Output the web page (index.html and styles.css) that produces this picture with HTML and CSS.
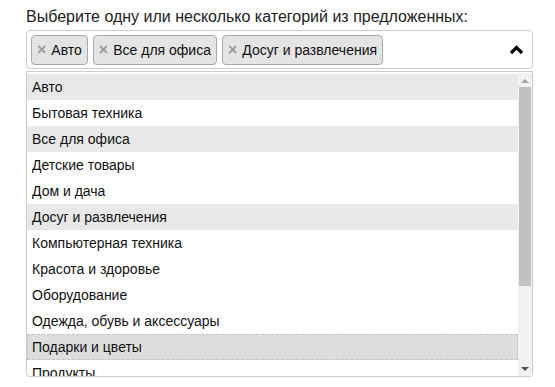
FILE: index.html
```html
<!DOCTYPE html>
<html lang="ru">

<head>
    <meta charset="UTF-8">
    <title>Категории</title>
    <link rel="stylesheet" href="styles.css">
</head>

<body>
    <div class="field">
        <label class="field-label">Выберите одну или несколько категорий из предложенных:</label>

        <!-- Поле с выбранными тегами -->
        <div class="select-box">
            <ul class="tags">
                <li class="tag"><span class="tag-remove">×</span>Авто</li>
                <li class="tag"><span class="tag-remove">×</span>Все для офиса</li>
                <li class="tag"><span class="tag-remove">×</span>Досуг и развлечения</li>
            </ul>
            <svg class="arrow" width="15" height="11" viewBox="0 0 15 11">
                <path d="M2 9 L7.5 3.5 L13 9" fill="none" stroke="#000" stroke-width="3.2"/>
            </svg>
        </div>

        <!-- Выпадающий список -->
        <div class="dropdown">
            <ul class="options">
                <li class="option selected">Авто</li>
                <li class="option">Бытовая техника</li>
                <li class="option selected">Все для офиса</li>
                <li class="option">Детские товары</li>
                <li class="option">Дом и дача</li>
                <li class="option selected">Досуг и развлечения</li>
                <li class="option">Компьютерная техника</li>
                <li class="option">Красота и здоровье</li>
                <li class="option">Оборудование</li>
                <li class="option">Одежда, обувь и аксессуары</li>
                <li class="option highlighted">Подарки и цветы</li>
                <li class="option">Продукты</li>
            </ul>

            <!-- Полоса прокрутки -->
            <div class="scrollbar">
                <div class="scroll-btn">
                    <svg width="8" height="5" viewBox="0 0 8 5"><path d="M0 5 L4 1 L8 5 Z" fill="#a3a3a3"/></svg>
                </div>
                <div class="scroll-track">
                    <div class="scroll-thumb"></div>
                </div>
                <div class="scroll-btn">
                    <svg width="8" height="5" viewBox="0 0 8 5"><path d="M0 0 L8 0 L4 4 Z" fill="#505050"/></svg>
                </div>
            </div>
        </div>
    </div>
</body>

</html>
```

FILE: styles.css
```css
* {
    margin: 0;
    padding: 0;
    box-sizing: border-box;
}

body {
    font-family: 'Liberation Sans', Arial, sans-serif;
    color: #222;
    background: #fff;
}

.field {
    width: 533px;
    padding: 8px 0 0 26px;
}

.field-label {
    display: block;
    font-size: 16px;
    line-height: 18px;
    margin-bottom: 4px;
}

/* Поле выбора */
.select-box {
    display: flex;
    align-items: center;
    border: 1px solid #ccc;
    border-radius: 4px;
    padding: 4px 8px 4px 4px;
    height: 39px;
}

.tags {
    list-style: none;
    display: flex;
    gap: 5px;
    flex: 1;
}

.tag {
    font-size: 14px;
    line-height: 27px;
    color: #111;
    background-color: #e4e4e4;
    border: 1px solid #aaa;
    border-radius: 4px;
    padding: 0 5px 0 5px;
}

.tag-remove {
    font-size: 16px;
    color: #999;
    font-weight: 700;
    margin-right: 5px;
}

.arrow {
    display: block;
}

/* Выпадающий список */
.dropdown {
    display: flex;
    margin-top: 2px;
    border: 1px solid #ccc;
    border-radius: 0 0 4px 4px;
    padding-top: 1px;
    box-shadow: 0 1px 2px rgba(0, 0, 0, 0.08);
}

.options {
    flex: 1;
    list-style: none;
    height: 303px;
    overflow: hidden;
    padding-top: 1px;
}

.option {
    font-size: 14px;
    line-height: 26px;
    height: 26px;
    padding: 0 5px;
    color: #111;
}

.option.selected {
    background-color: #e8e8e8;
}

.option.highlighted {
    background-color: #ddd;
    outline: 1px dashed #c4c4c4;
    outline-offset: -1px;
}

/* Полоса прокрутки */
.scrollbar {
    width: 14px;
    display: flex;
    flex-direction: column;
    background-color: #f1f1f1;
}

.scroll-btn {
    height: 14px;
    display: flex;
    align-items: center;
    justify-content: center;
}

.scroll-track {
    flex: 1;
}

.scroll-thumb {
    height: 199px;
    margin: 0 1px;
    background-color: #c1c1c1;
}
```
